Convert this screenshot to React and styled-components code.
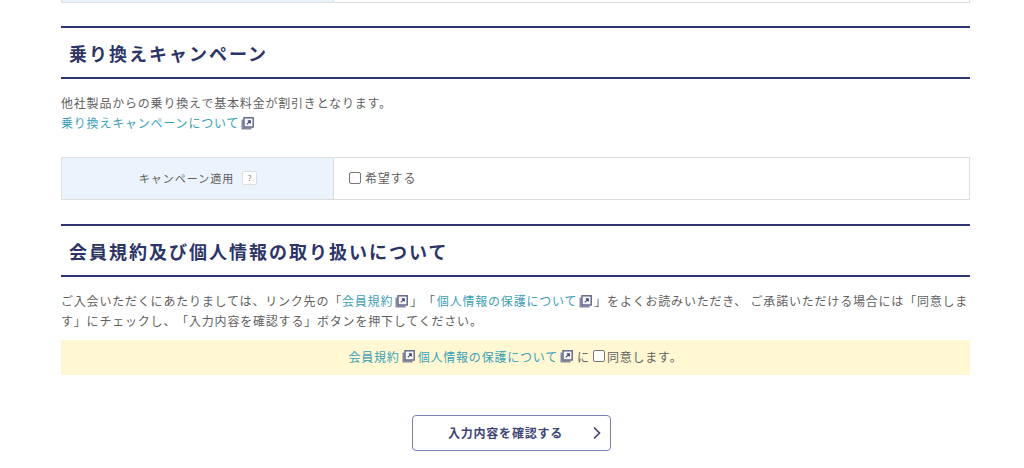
import React from 'react'
import styled, { createGlobalStyle } from 'styled-components'

const Global = createGlobalStyle`
  html, body { margin: 0; padding: 0; background: #fff; }
  body {
    font-family: "Noto Sans CJK JP", "Noto Sans", sans-serif;
    font-size: 12px;
    letter-spacing: 0.8px;
    text-spacing-trim: space-all;
    color: #5f5f5f;
    overflow: hidden;
  }
`

const Page = styled.div`
  width: 909px;
  margin-left: 61px;
  height: 468px;
`

const PrevRow = styled.div`
  height: 2px;
  display: grid;
  grid-template-columns: 272px 1fr;
  border: solid #ddd;
  border-width: 0 1px 1px;
  & > div:first-child { background: #ebf3fd; border-right: 1px solid #ddd; }
`

const Heading = styled.h2`
  margin: ${({ $top }) => $top}px 0 0;
  height: 53px;
  box-sizing: border-box;
  padding-left: 8px;
  display: flex;
  align-items: center;
  border-top: 2px solid #2e3672;
  border-bottom: 2px solid #2e3672;
  font-size: 18px;
  font-weight: 700;
  letter-spacing: 2px;
  color: #2d3566;
`

const Text = styled.p`
  margin: ${({ $top }) => $top}px 0 0;
  line-height: 20px;
`

const Link = styled.a`
  color: #3ba0b8;
  text-decoration: none;
  margin-left: ${({ $ml }) => $ml || 0}px;
`

const IconSvg = styled.svg`
  width: 13px;
  height: 13px;
  margin: 0 2px 0 2px;
  vertical-align: -2px;
`

const ExtIcon = () => (
  <IconSvg viewBox="0 0 13 13">
    <path d="M0.5 2.5h2v8h8v2h-10z" fill="#85899f" />
    <rect x="3" y="0.8" width="9.2" height="9.2" fill="#f8f8fb" stroke="#5d6285" strokeWidth="1.4" />
    <path d="M5.8 7.4L9 4.2M6.8 3.9h2.5v2.5" fill="none" stroke="#3f4470" strokeWidth="1.1" />
  </IconSvg>
)

const FormRow = styled.div`
  margin-top: 24px;
  height: 43px;
  box-sizing: border-box;
  display: grid;
  grid-template-columns: 272px 1fr;
  border: 1px solid #ddd;
`

const LabelCell = styled.div`
  background: #ebf3fd;
  border-right: 1px solid #ddd;
  display: flex;
  align-items: center;
  justify-content: center;
  gap: 8px;
  font-size: 11px;
  letter-spacing: 1px;
  padding: 0 0 2px 1px;
`

const HelpBadge = styled.span`
  width: 13px;
  height: 12px;
  display: flex;
  align-items: center;
  justify-content: center;
  background: #fff;
  border: 1px solid #ddd;
  border-radius: 2px;
  font-size: 8px;
  letter-spacing: 0;
  color: #777;
`

const ValueCell = styled.label`
  display: flex;
  align-items: center;
  padding: 0 0 2px 15px;
`

const Box = styled.span`
  display: inline-block;
  flex: none;
  width: 12px;
  height: 12px;
  box-sizing: border-box;
  background: #fff;
  border: 1px solid #777;
  border-radius: 2px;
  margin-right: ${({ $gap }) => $gap}px;
  vertical-align: -2px;
`

const AgreeBar = styled.div`
  margin-top: 9px;
  height: 35px;
  box-sizing: border-box;
  padding-bottom: 3px;
  background: #fff8d2;
  display: flex;
  align-items: center;
  justify-content: center;
`

const Particle = styled.span`
  margin: 0 3px 0 2px;
`

const ButtonRow = styled.div`
  margin-top: 40px;
  display: flex;
  justify-content: center;
  padding-right: 8px;
`

const Button = styled.button`
  width: 199px;
  height: 36px;
  position: relative;
  background: #fff;
  border: 1px solid #7a80b8;
  border-radius: 4px;
  font-family: inherit;
  font-size: 12px;
  font-weight: 700;
  letter-spacing: 0.8px;
  color: #3e4577;
  padding: 0 12px 2px 0;
  svg { position: absolute; right: 5px; top: 9px; }
`

export default function App() {
  return (
    <Page>
      <Global />
      <PrevRow><div /><div /></PrevRow>
      <Heading $top={23}>乗り換えキャンペーン</Heading>
      <Text $top={14}>
        他社製品からの乗り換えで基本料金が割引きとなります。<br />
        <Link href="#">乗り換えキャンペーンについて</Link><ExtIcon />
      </Text>
      <FormRow>
        <LabelCell>キャンペーン適用<HelpBadge>?</HelpBadge></LabelCell>
        <ValueCell><Box $gap={4} />希望する</ValueCell>
      </FormRow>
      <Heading $top={24}>会員規約及び個人情報の取り扱いについて</Heading>
      <Text $top={14}>
        ご入会いただくにあたりましては、リンク先の「<Link href="#">会員規約</Link><ExtIcon />」「<Link href="#" $ml={1}>個人情報の保護について</Link><ExtIcon />」をよくお読みいただき、 ご承諾いただける場合には「同意しま<br />
        す」にチェックし、「入力内容を確認する」ボタンを押下してください。
      </Text>
      <AgreeBar>
        <Link href="#">会員規約</Link><ExtIcon /><Link href="#" $ml={1}>個人情報の保護について</Link><ExtIcon /><Particle>に</Particle><Box $gap={2} />同意します。
      </AgreeBar>
      <ButtonRow>
        <Button>
          入力内容を確認する
          <svg width="16" height="16" viewBox="0 0 16 16" fill="none" stroke="#3e4577" strokeWidth="1.7">
            <path d="M5 2.5L10.5 8L5 13.5" />
          </svg>
        </Button>
      </ButtonRow>
    </Page>
  )
}
